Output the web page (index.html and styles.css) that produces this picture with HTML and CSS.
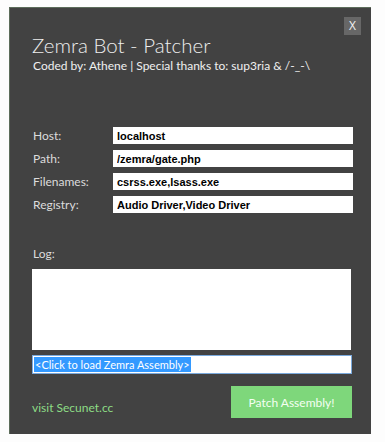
FILE: index.html
```html
<!DOCTYPE html>
<html lang="en">
    <head>
        <meta charset="UTF-8">
        <title>Zemra Bot - Patcher</title>
        <link rel="stylesheet" href="styles.css">
    </head>
    <body>
        <div class="window">
            <div class="titlebar">
                <button class="close-btn">X</button>
            </div>

            <header class="header">
                <h1>Zemra Bot - Patcher</h1>
                <p class="credits">Coded by: Athene | Special thanks to: sup3ria &amp; /-_-\</p>
            </header>

            <div class="settings">
                <label class="field-label">Host:</label>
                <input class="field-input" type="text" value="localhost">
                <label class="field-label">Path:</label>
                <input class="field-input" type="text" value="/zemra/gate.php">
                <label class="field-label">Filenames:</label>
                <input class="field-input" type="text" value="csrss.exe,lsass.exe">
                <label class="field-label">Registry:</label>
                <input class="field-input" type="text" value="Audio Driver,Video Driver">
            </div>

            <div class="log-section">
                <p class="log-label">Log:</p>
                <div class="log-box"></div>
                <div class="assembly-field"><span class="selected">&lt;Click to load Zemra Assembly&gt;</span></div>
            </div>

            <footer class="footer">
                <span class="visit">visit Secunet.cc</span>
                <button class="patch-btn">Patch Assembly!</button>
            </footer>
        </div>
    </body>
</html>
```

FILE: styles.css
```css
* {
    margin: 0;
    padding: 0;
    box-sizing: border-box;
}

body {
    background: #fdfdfd;
    font-family: Lato, 'Open Sans', sans-serif;
    color: #e6e6e6;
}

.window {
    width: 362px;
    height: 427px;
    margin: 7px 0 0 9px;
    background: #424242;
    border-top: 1px solid #5d6d5b;
    border-left: 1px solid #5d6d5b;
    padding: 0 10px 0 22px;
}

.titlebar {
    display: flex;
    justify-content: flex-end;
    padding-top: 9px;
}

.close-btn {
    width: 17px;
    height: 18px;
    border: none;
    background: #676767;
    color: #f2f2f2;
    font-family: 'Open Sans', sans-serif;
    font-size: 12px;
    line-height: 18px;
}

.header {
    height: 48px;
}

.header h1 {
    font-weight: 300;
    font-size: 20.5px;
    line-height: 26px;
    color: #eeeeee;
    margin-top: -3px;
}

.credits {
    font-size: 12px;
    line-height: 16px;
    color: #f0f0f0;
    padding-left: 1px;
}

.settings {
    display: grid;
    grid-template-columns: 81px 240px;
    row-gap: 6px;
    margin-top: 47px;
}

.field-label {
    font-size: 12px;
    line-height: 17px;
    color: #dcdcdc;
    padding-left: 1px;
}

.field-input {
    height: 17px;
    border: none;
    background: #fff;
    font-family: 'Liberation Sans', Arial, sans-serif;
    font-weight: bold;
    font-size: 11px;
    color: #000;
    padding: 0 4px;
    outline: none;
}

.log-section {
    margin-top: 33px;
}

.log-label {
    font-size: 12px;
    line-height: 16px;
    color: #dcdcdc;
    padding-left: 1px;
}

.log-box {
    width: 319px;
    height: 81px;
    background: #fff;
    margin-top: 7px;
}

.assembly-field {
    width: 320px;
    height: 19px;
    margin-top: 5px;
    background: #fff;
    border: 1px solid #7aa9dc;
    padding: 1px 1px;
    font-size: 11px;
    line-height: 15px;
    color: #fff;
}

.selected {
    display: inline-block;
    background: #3399ff;
    padding: 0 1px;
}

.footer {
    display: flex;
    justify-content: space-between;
    align-items: flex-end;
    width: 320px;
    margin-top: 12px;
}

.visit {
    color: #8ddc85;
    font-size: 12px;
    line-height: 16px;
    margin-bottom: 2px;
}

.patch-btn {
    width: 121px;
    height: 32px;
    border: none;
    background: #7ed77b;
    color: #f4fff2;
    font-family: Lato, sans-serif;
    font-size: 12px;
}
```
